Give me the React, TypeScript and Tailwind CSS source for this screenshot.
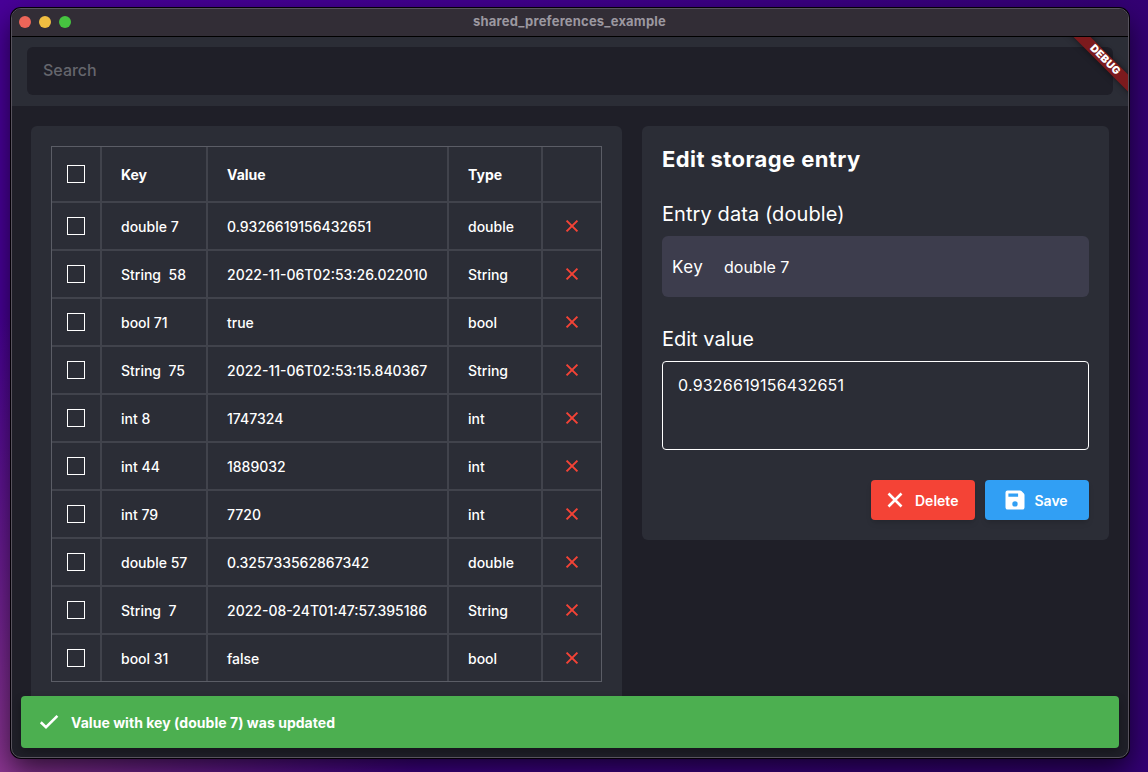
import React from "react";

const rows = [
  ["double 7", "0.9326619156432651", "double"],
  ["String  58", "2022-11-06T02:53:26.022010", "String"],
  ["bool 71", "true", "bool"],
  ["String  75", "2022-11-06T02:53:15.840367", "String"],
  ["int 8", "1747324", "int"],
  ["int 44", "1889032", "int"],
  ["int 79", "7720", "int"],
  ["double 57", "0.325733562867342", "double"],
  ["String  7", "2022-08-24T01:47:57.395186", "String"],
  ["bool 31", "false", "bool"],
];

const rowGrid = "grid grid-cols-[50px_106px_241px_94px_58px]";
const cell = "flex items-center border-r-2 border-[#41434c] pt-0.5 pl-[19px] whitespace-pre";

function Box() {
  return (
    <div className="flex items-center justify-center border-r-2 border-[#41434c]">
      <div className="size-[18px] border border-white" />
    </div>
  );
}

function CrossIcon({ className, width }: { className: string; width: number }) {
  return (
    <svg viewBox="0 0 24 24" className={className} fill="none" stroke="currentColor" strokeWidth={width}>
      <path d="M5.500 5.500l13 13M18.500 5.500L5.500 18.500" />
    </svg>
  );
}

function SaveIcon() {
  return (
    <svg viewBox="0 0 24 24" className="size-6 fill-white">
      <path
        fillRule="evenodd"
        d="M17 2.500H4.500a2 2 0 0 0-2 2v15a2 2 0 0 0 2 2h15a2 2 0 0 0 2-2V7a2 2 0 0 0-.6-1.400l-2.500-2.500A2 2 0 0 0 17 2.500zM5.400 5.400h9.700v3.300H5.400zM12 13.200a2.700 2.700 0 1 1 0 5.400a2.700 2.700 0 0 1 0-5.400z"
      />
    </svg>
  );
}

export default function App() {
  return (
    <div className="h-[772px] w-[1148px] overflow-hidden bg-[linear-gradient(90deg,#480098_0%,#40008c_45%,#330073_100%)] font-['Inter',sans-serif] text-white">
      <div className="h-full bg-[radial-gradient(ellipse_420px_460px_at_0%_100%,#8a3590_0%,transparent_100%)] pt-2 pl-[11px]">
        <div className="relative flex h-[750px] w-[1118px] flex-col overflow-hidden rounded-[10px] border border-[#57535d] bg-[#1f1f28] shadow-[0_0_0_1px_#050008,0_12px_28px_rgba(0,0,0,0.65)]">
          <div className="flex h-7 shrink-0 items-center border-b border-black bg-[#322d36]">
            <div className="flex gap-2 pb-px pl-[7px]">
              <div className="size-3 rounded-full bg-[#ec6559]" />
              <div className="size-3 rounded-full bg-[#f0bd41]" />
              <div className="size-3 rounded-full bg-[#46c440]" />
            </div>
            <div className="flex-1 pr-[60px] pb-px text-center text-[13px] font-bold tracking-[0.2px] text-[#9c98a0]">
              shared_preferences_example
            </div>
          </div>

          <div className="h-[69px] shrink-0 bg-[#2b2d36] px-[15px] pt-2.5">
            <div className="flex h-12 items-center rounded-md bg-[#1f1f28] px-4 pb-0.5 text-base font-medium text-[#65666d]">
              Search
            </div>
          </div>

          <div className="flex h-[651px] items-start gap-5 overflow-hidden px-[19px] pt-5">
            <div className="h-[610px] w-[591px] shrink-0 rounded-md bg-[#2b2d36] p-5">
              <div className="h-[536px] w-[551px] overflow-hidden border border-[#5b5d66] text-sm font-medium">
                <div className={`${rowGrid} h-14 border-b-2 border-[#41434c] font-bold`}>
                  <Box />
                  <div className={cell}>Key</div>
                  <div className={cell}>Value</div>
                  <div className={cell}>Type</div>
                </div>
                {rows.map(([k, v, t]) => (
                  <div key={k} className={`${rowGrid} h-12 border-b-2 border-[#41434c]`}>
                    <Box />
                    <div className={cell}>{k}</div>
                    <div className={cell}>{v}</div>
                    <div className={cell}>{t}</div>
                    <div className="flex items-center justify-center">
                      <CrossIcon className="size-5 text-[#f44336]" width={2.4} />
                    </div>
                  </div>
                ))}
              </div>
            </div>

            <div className="h-[414px] w-[467px] rounded-md bg-[#2b2d36] px-5">
              <h1 className="pt-[18px] text-[22px] leading-[30px] font-bold tracking-[0.42px]">Edit storage entry</h1>
              <h2 className="mt-[26px] text-xl leading-7 tracking-[0.08px]">Entry data (double)</h2>
              <div className="mt-2 flex h-[61px] items-center rounded-md bg-[#3d3d4d] px-2.5">
                <span className="w-[52px] pt-0.5 text-[17px] tracking-[0.4px]">Key</span>
                <span className="text-base">double 7</span>
              </div>
              <h2 className="mt-7 text-xl leading-7">Edit value</h2>
              <div className="mt-2 h-[89px] rounded border border-white px-[15px] pt-[11px] text-base tracking-[0.22px]">
                0.9326619156432651
              </div>
              <div className="mt-[30px] flex justify-end gap-2.5 text-sm font-semibold">
                <div className="flex h-10 w-[104px] items-center rounded bg-[#f44336] pl-3 shadow-md">
                  <CrossIcon className="size-6" width={2.6} />
                  <span className="ml-2 pt-0.5">Delete</span>
                </div>
                <div className="flex h-10 w-[104px] items-center rounded bg-[#319ff4] pl-[17.5px] shadow-md">
                  <SaveIcon />
                  <span className="ml-2 pt-0.5">Save</span>
                </div>
              </div>
            </div>
          </div>

          <div className="absolute right-[9px] bottom-[9px] left-[9px] flex h-[52px] items-center rounded bg-[#4caf50] pl-4 text-sm font-bold shadow-[0_4px_8px_rgba(0,0,0,0.3)]">
            <svg viewBox="0 0 24 24" className="size-6" fill="none" stroke="currentColor" strokeWidth={2.600}>
              <path d="M3.800 12.200l5.200 5L20.400 5.800" />
            </svg>
            <span className="ml-2.5 pt-0.5 tracking-[0.04px]">Value with key (double 7) was updated</span>
          </div>

          <div className="absolute top-7 right-0 size-20 overflow-hidden">
            <div className="absolute top-[16.5px] left-[7px] flex h-3 w-[100px] rotate-45 items-center justify-center bg-[#7c1a1d] text-[10.5px] font-black tracking-[0.2px] shadow-[0_0_6px_rgba(0,0,0,0.5)]">
              DEBUG
            </div>
          </div>
        </div>
      </div>
    </div>
  );
}
